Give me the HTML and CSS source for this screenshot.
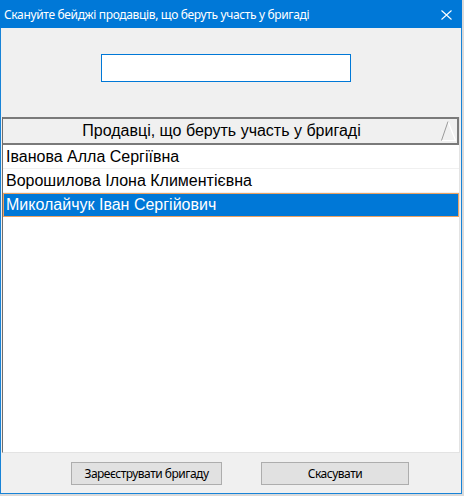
FILE: index.html
```html
<!DOCTYPE html>
<html lang="uk">
<head>
<meta charset="utf-8">
<title>Бригада</title>
<link rel="stylesheet" href="styles.css">
</head>
<body>
<div class="window">
  <div class="titlebar">
    <span class="title">Скануйте бейджі продавців, що беруть участь у бригаді</span>
    <svg class="close" width="11" height="10" viewBox="0 0 11 10">
      <path d="M0.5 0.5 L10.5 9.5 M10.5 0.5 L0.5 9.5" stroke="#fff" stroke-width="1.1" fill="none"/>
    </svg>
  </div>
  <div class="client">
    <div class="scan-row"><input class="scan-input" type="text"></div>
    <div class="list">
      <div class="list-header">
        <span class="header-text">Продавці, що беруть участь у бригаді</span>
        <svg class="sort" width="17" height="24" viewBox="0 0 17 24">
          <path d="M8 2.5 L15.5 21.5 L1.5 21.5" stroke="#ffffff" stroke-width="1.2" fill="none"/>
          <path d="M8 2.5 L1.5 21.5" stroke="#9a9a9a" stroke-width="1" fill="none"/>
        </svg>
      </div>
      <div class="row">Іванова Алла Сергіївна</div>
      <div class="row">Ворошилова Ілона Климентієвна</div>
      <div class="row selected">Миколайчук Іван Сергійович</div>
    </div>
    <div class="buttons">
      <button class="btn btn-register">Зареєструвати бригаду</button>
      <button class="btn btn-cancel">Скасувати</button>
    </div>
  </div>
</div>
</body>
</html>
```

FILE: styles.css
```css
html, body {
  margin: 0;
  padding: 0;
}

body {
  width: 464px;
  height: 496px;
  background: #dadada;
  overflow: hidden;
}

.window {
  width: 462px;
  height: 494px;
  box-sizing: border-box;
  border: 1px solid #1883d7;
  border-top: none;
  background: #f0f0f0;
  display: flex;
  flex-direction: column;
}

.titlebar {
  height: 28px;
  margin: 0 -1px;
  background: #0078d7;
  display: flex;
  align-items: center;
  padding-left: 4px;
  padding-right: 10px;
  flex-shrink: 0;
}

.title {
  flex: 1;
  color: #ffffff;
  font-family: "Noto Sans", "Open Sans", sans-serif;
  font-size: 12px;
  letter-spacing: -0.35px;
  line-height: 16px;
  padding-top: 1px;
  white-space: nowrap;
}

.close {
  display: block;
  margin-top: 1px;
}

.client {
  flex: 1;
  display: flex;
  flex-direction: column;
}

.scan-row {
  padding-top: 26px;
  padding-left: 100px;
}

.scan-input {
  display: block;
  box-sizing: border-box;
  width: 250px;
  height: 28px;
  margin: 0;
  border: 1px solid #0078d7;
  background: #ffffff;
  outline: none;
  padding: 0 4px;
}

.list {
  margin: 35px 1px 0 1px;
  height: 336px;
  box-sizing: border-box;
  border-left: 1px solid #6e6e6e;
  border-right: 1px solid #e3e3e3;
  border-bottom: 1px solid #e3e3e3;
  background: #ffffff;
  font-family: "Liberation Sans", Arial, sans-serif;
  font-size: 16px;
  color: #000000;
}

.list-header {
  height: 28px;
  box-sizing: border-box;
  border-top: 2px solid #7a7a7a;
  border-bottom: 2px solid #7a7a7a;
  border-right: 2px solid #7a7a7a;
  background: #f0f0f0;
  display: flex;
  align-items: center;
}

.header-text {
  flex: 1;
  text-align: center;
  line-height: 24px;
  white-space: nowrap;
}

.sort {
  display: block;
  flex-shrink: 0;
}

.row {
  height: 24px;
  box-sizing: border-box;
  border-bottom: 1px solid #f0f0f0;
  padding-left: 3px;
  line-height: 23px;
  white-space: nowrap;
}

.row.selected {
  background: #0078d7;
  color: #ffffff;
  border: 1px solid #eba262;
  padding-left: 2px;
  line-height: 22px;
}

.buttons {
  display: flex;
  gap: 39px;
  padding-left: 70px;
  margin-top: 9px;
}

.btn {
  height: 23px;
  box-sizing: border-box;
  margin: 0;
  padding: 0;
  border: 1px solid #adadad;
  background: #e1e1e1;
  font-family: "Noto Sans", "Open Sans", sans-serif;
  font-size: 12px;
  letter-spacing: -0.5px;
  color: #000000;
  line-height: 20px;
}

.btn-register {
  width: 151px;
}

.btn-cancel {
  width: 148px;
}
```
